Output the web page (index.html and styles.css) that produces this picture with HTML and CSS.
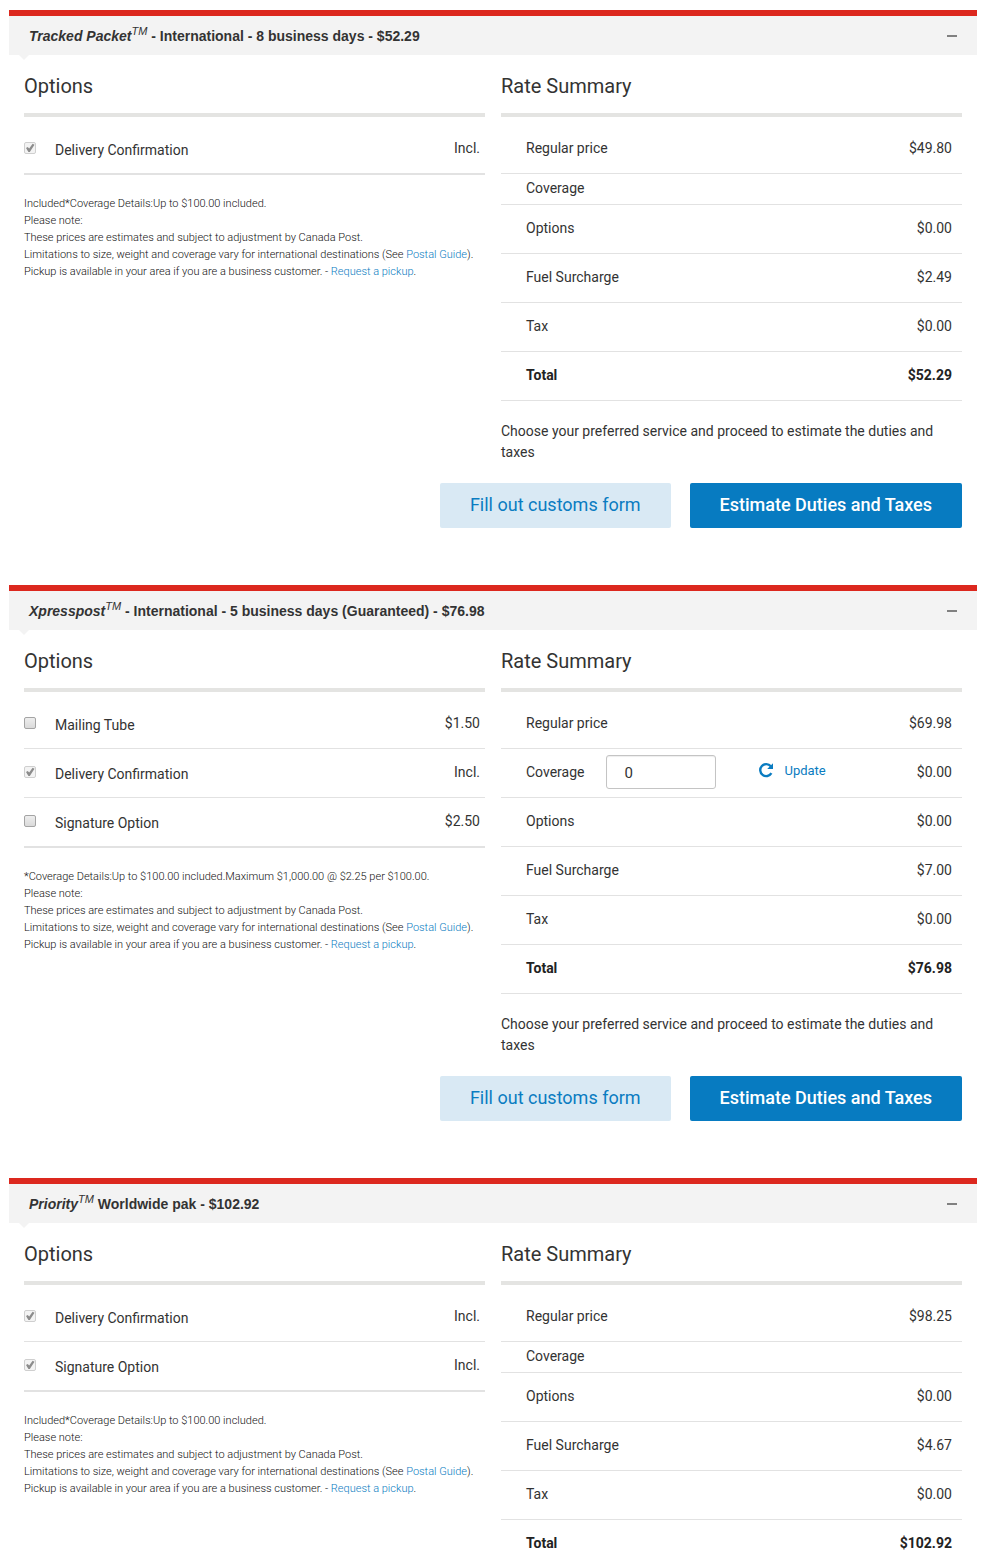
FILE: index.html
```html
<!DOCTYPE html>
<html lang="en">
<head>
<meta charset="utf-8">
<title>Find a rate</title>
<link rel="stylesheet" href="styles.css">
</head>
<body>
<div class="rates">

	<!-- Tracked Packet -->
	<section class="rate">
		<button type="button" class="rate_head" aria-expanded="true">
			<span><em>Tracked Packet<sup>TM</sup></em> - International - 8 business days - $52.29</span>
			<span class="minus"></span>
		</button>
		<div class="rate_body">
			<div class="col">
				<h2>Options</h2>
				<table class="options">
					<tr>
						<td class="check"><input type="checkbox" id="tp_dc" checked disabled></td>
						<td class="name"><label for="tp_dc">Delivery Confirmation</label></td>
						<td class="price">Incl.</td>
					</tr>
				</table>
				<p class="notes">
					Included*Coverage Details:Up to $100.00 included.<br>
					Please note:<br>
					These prices are estimates and subject to adjustment by Canada Post.<br>
					Limitations to size, weight and coverage vary for international destinations (See <a href="#">Postal Guide</a>).<br>
					Pickup is available in your area if you are a business customer. - <a href="#">Request a pickup</a>.
				</p>
			</div>
			<div class="col">
				<h2>Rate Summary</h2>
				<table class="summary">
					<tr><th>Regular price</th><td>$49.80</td></tr>
					<tr class="short"><th>Coverage</th><td></td></tr>
					<tr><th>Options</th><td>$0.00</td></tr>
					<tr><th>Fuel Surcharge</th><td>$2.49</td></tr>
					<tr><th>Tax</th><td>$0.00</td></tr>
					<tr class="total"><th>Total</th><td>$52.29</td></tr>
				</table>
				<p class="choose">Choose your preferred service and proceed to estimate the duties and taxes</p>
			</div>
		</div>
		<div class="actions">
			<button type="button" class="btn btn_light">Fill out customs form</button>
			<button type="button" class="btn btn_main">Estimate Duties and Taxes</button>
		</div>
	</section>

	<!-- Xpresspost -->
	<section class="rate">
		<button type="button" class="rate_head" aria-expanded="true">
			<span><em>Xpresspost<sup>TM</sup></em> - International - 5 business days (Guaranteed) - $76.98</span>
			<span class="minus"></span>
		</button>
		<div class="rate_body">
			<div class="col">
				<h2>Options</h2>
				<table class="options">
					<tr>
						<td class="check"><input type="checkbox" id="xp_mt"></td>
						<td class="name"><label for="xp_mt">Mailing Tube</label></td>
						<td class="price">$1.50</td>
					</tr>
					<tr>
						<td class="check"><input type="checkbox" id="xp_dc" checked disabled></td>
						<td class="name"><label for="xp_dc">Delivery Confirmation</label></td>
						<td class="price">Incl.</td>
					</tr>
					<tr>
						<td class="check"><input type="checkbox" id="xp_so"></td>
						<td class="name"><label for="xp_so">Signature Option</label></td>
						<td class="price">$2.50</td>
					</tr>
				</table>
				<p class="notes">
					*Coverage Details:Up to $100.00 included.Maximum $1,000.00 @ $2.25 per $100.00.<br>
					Please note:<br>
					These prices are estimates and subject to adjustment by Canada Post.<br>
					Limitations to size, weight and coverage vary for international destinations (See <a href="#">Postal Guide</a>).<br>
					Pickup is available in your area if you are a business customer. - <a href="#">Request a pickup</a>.
				</p>
			</div>
			<div class="col">
				<h2>Rate Summary</h2>
				<table class="summary">
					<tr><th>Regular price</th><td>$69.98</td></tr>
					<tr>
						<th>
							<div class="coverage">
								<label for="xp_cov">Coverage</label>
								<input type="text" id="xp_cov" value="0">
								<a href="#" class="update">
									<svg width="16" height="16" viewBox="0 0 16 16" aria-hidden="true">
										<path d="M13.4 11.2A6 6 0 1 1 12.8 4.2" fill="none" stroke="#0a7cc1" stroke-width="2.4"/>
										<path d="M15 1.2V7H9.2z" fill="#0a7cc1"/>
									</svg>
									Update
								</a>
							</div>
						</th>
						<td>$0.00</td>
					</tr>
					<tr><th>Options</th><td>$0.00</td></tr>
					<tr><th>Fuel Surcharge</th><td>$7.00</td></tr>
					<tr><th>Tax</th><td>$0.00</td></tr>
					<tr class="total"><th>Total</th><td>$76.98</td></tr>
				</table>
				<p class="choose">Choose your preferred service and proceed to estimate the duties and taxes</p>
			</div>
		</div>
		<div class="actions">
			<button type="button" class="btn btn_light">Fill out customs form</button>
			<button type="button" class="btn btn_main">Estimate Duties and Taxes</button>
		</div>
	</section>

	<!-- Priority -->
	<section class="rate">
		<button type="button" class="rate_head" aria-expanded="true">
			<span><em>Priority<sup>TM</sup></em> Worldwide pak - $102.92</span>
			<span class="minus"></span>
		</button>
		<div class="rate_body">
			<div class="col">
				<h2>Options</h2>
				<table class="options">
					<tr>
						<td class="check"><input type="checkbox" id="pr_dc" checked disabled></td>
						<td class="name"><label for="pr_dc">Delivery Confirmation</label></td>
						<td class="price">Incl.</td>
					</tr>
					<tr>
						<td class="check"><input type="checkbox" id="pr_so" checked disabled></td>
						<td class="name"><label for="pr_so">Signature Option</label></td>
						<td class="price">Incl.</td>
					</tr>
				</table>
				<p class="notes">
					Included*Coverage Details:Up to $100.00 included.<br>
					Please note:<br>
					These prices are estimates and subject to adjustment by Canada Post.<br>
					Limitations to size, weight and coverage vary for international destinations (See <a href="#">Postal Guide</a>).<br>
					Pickup is available in your area if you are a business customer. - <a href="#">Request a pickup</a>.
				</p>
			</div>
			<div class="col">
				<h2>Rate Summary</h2>
				<table class="summary">
					<tr><th>Regular price</th><td>$98.25</td></tr>
					<tr class="short"><th>Coverage</th><td></td></tr>
					<tr><th>Options</th><td>$0.00</td></tr>
					<tr><th>Fuel Surcharge</th><td>$4.67</td></tr>
					<tr><th>Tax</th><td>$0.00</td></tr>
					<tr class="total"><th>Total</th><td>$102.92</td></tr>
				</table>
			</div>
		</div>
	</section>

</div>
</body>
</html>
```
FILE: styles.css
```css
* {margin:0; padding:0; box-sizing:border-box}
body {
	background-color:#fff;
	color:#333;
	font-family:Roboto, "Liberation Sans", sans-serif;
	font-size:14px;
	line-height:21px;
}
a {color:#0a7cc1; text-decoration:none}

.rates {padding:10px 20px 0 9px}
.rate + .rate {margin-top:57px}

/* header bar */
.rate_head {
	position:relative;
	display:flex;
	justify-content:space-between;
	align-items:center;
	width:100%;
	height:45px;
	padding:0 20px;
	border:0;
	border-top:6px solid #dc281e;
	background-color:#f3f3f3;
	color:#333;
	font-family:"Liberation Sans", Arial, sans-serif;
	font-size:14px;
	font-weight:bold;
	line-height:20px;
	text-align:left;
}
.rate_head::after {
	content:"";
	position:absolute;
	left:10px;
	top:100%;
	border:5px solid transparent;
	border-top-color:#f3f3f3;
	border-bottom:0;
}
.rate_head sup {
	font-size:11px;
	font-weight:normal;
	line-height:0;
}
.minus {
	width:10px;
	height:2px;
	background-color:#808080;
}

/* two columns */
.rate_body {
	display:grid;
	grid-template-columns:1fr 1fr;
	gap:16px;
	padding:0 15px;
}
h2 {
	padding:18px 0 14px;
	border-bottom:4px solid #e4e4e2;
	font-size:20px;
	font-weight:400;
	line-height:26px;
}
table {
	width:100%;
	margin-top:8px;
	border-spacing:0;
}
td, th {
	height:49px;
	padding-bottom:2px;
	border-bottom:1px solid #e2e2e2;
	font-weight:400;
	text-align:left;
	vertical-align:middle;
}

.options .check {width:31px}
.options .name {padding-top:4px}
.options .price {
	padding-right:5px;
	text-align:right;
}
.options tr:last-child td {
	height:50px;
	border-bottom-width:2px;
}
.options input {
	display:block;
	appearance:none;
	width:12px;
	height:12px;
	border:1px solid #a4a4a4;
	border-radius:2px;
	background:linear-gradient(#eee, #dadada);
}
.options input:disabled {
	border-color:#cfcfcf;
	background:#f3f3f3;
}
.options input:checked::before {
	content:"";
	display:block;
	width:10px;
	height:10px;
	background-color:#8c8c8c;
	clip-path:polygon(10% 50%, 27% 39%, 42% 56%, 76% 8%, 95% 18%, 48% 91%, 34% 91%);
}
.notes {
	margin-top:20px;
	color:#111;
	font-size:11px;
	font-weight:300;
	line-height:17px;
}

.summary th {padding-left:25px}
.summary td {
	padding-right:10px;
	text-align:right;
}
.summary .short th,
.summary .short td {height:31px}
.summary .total th,
.summary .total td {font-weight:700; color:#222}
.coverage {
	display:flex;
	align-items:center;
}
.coverage input {
	width:110px;
	height:34px;
	margin-left:22px;
	padding:2px 17px 0;
	border:1px solid #c4c4c4;
	border-radius:3px;
	box-shadow:inset 0 1px 1px #eee;
	color:#333;
	font-family:inherit;
	font-size:15px;
}
.update {
	display:flex;
	align-items:center;
	gap:10px;
	margin-left:42px;
	padding-bottom:4px;
	font-size:13px;
}
.choose {margin-top:20px}

/* buttons */
.actions {
	display:flex;
	justify-content:flex-end;
	gap:19px;
	padding:20px 15px 0;
}
.btn {
	height:45px;
	padding:0 30px 2px;
	border:0;
	border-radius:2px;
	font-family:inherit;
	font-size:18px;
}
.btn_light {
	background-color:#d9e9f4;
	color:#0a7cc1;
}
.btn_main {
	background-color:#077bc1;
	color:#fff;
	font-weight:500;
}
```
